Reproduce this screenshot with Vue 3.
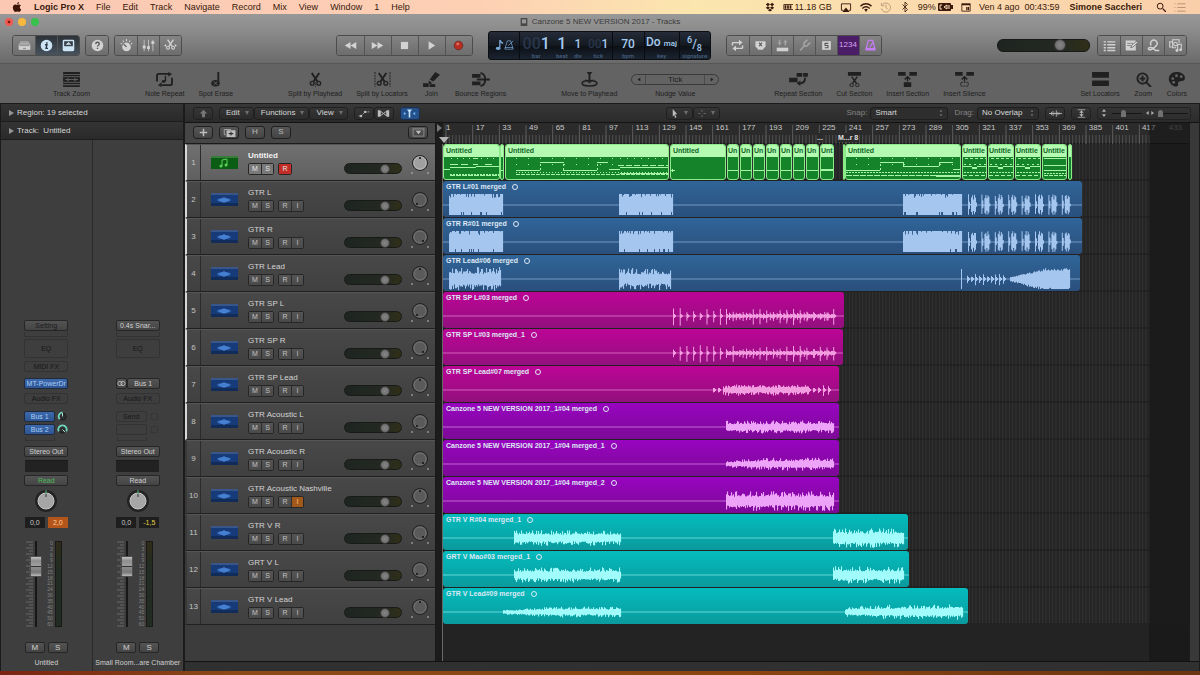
<template>
  <div class="desktop">
    <nav class="menubar" aria-label="Application menu">
      <svg class="menubar__apple" viewBox="0 0 12 12" v-html="icons.apple"></svg>
      <a v-for="(item, i) in menus" :key="item" href="#" :class="['menubar__item', { 'menubar__item--app': i === 0 }]">{{ item }}</a>
      <div class="menubar__status">
        <svg class="icon10" viewBox="0 0 12 12" v-html="icons.dropbox"></svg>
        <span class="menubar__memory"><svg class="icon10" viewBox="0 0 12 12" v-html="icons.memory"></svg>11.18 GB</span>
        <svg class="icon12" viewBox="0 0 12 12" v-html="icons.airplay"></svg>
        <svg class="icon12" viewBox="0 0 12 12" v-html="icons.wifi"></svg>
        <svg class="icon12 faint" viewBox="0 0 12 12" v-html="icons.clock"></svg>
        <svg class="icon10" viewBox="0 0 12 12" v-html="icons.bluetooth"></svg>
        <span class="menubar__battery">99%<svg class="battery" viewBox="0 0 15 8" v-html="icons.battery"></svg></span>
        <svg class="icon10" viewBox="0 0 12 12" v-html="icons.calendar"></svg>
        <span>Ven 4 ago&nbsp; 00:43:59</span>
        <b>Simone Saccheri</b>
        <svg class="icon10 menubar__search" viewBox="0 0 12 12" v-html="icons.search"></svg>
        <svg class="icon12 faint" viewBox="0 0 12 12" v-html="icons.menuList"></svg>
      </div>
    </nav>

    <main class="window">
      <header class="titlebar">
        <div class="lights">
          <button class="light light--close" aria-label="Close"></button>
          <button class="light light--min" aria-label="Minimize"></button>
          <button class="light light--max" aria-label="Zoom window"></button>
        </div>
        <h1 class="titlebar__title">
          <svg class="icon8" viewBox="0 0 12 12" v-html="icons.doc"></svg>Canzone 5 NEW VERSION 2017 - Tracks
        </h1>
      </header>

      <section class="control">
        <div v-for="(group, g) in leftGroups" :key="g" class="segment">
          <button v-for="b in group" :key="b.icon" :class="['segment__btn', { 'segment__btn--on': b.on }]" :aria-label="b.label">
            <svg viewBox="0 0 18 18" v-html="icons[b.icon]"></svg>
          </button>
        </div>
        <div class="control__gap control__gap--left"></div>
        <div class="segment segment--transport">
          <button v-for="b in transport" :key="b.icon" class="segment__btn" :aria-label="b.label">
            <svg viewBox="0 0 18 18" v-html="icons[b.icon]"></svg>
          </button>
        </div>
        <div class="lcd">
          <div class="lcd__icons">
            <svg viewBox="0 0 12 14" v-html="icons.lcdNote"></svg>
            <svg viewBox="0 0 12 14" v-html="icons.lcdMetro"></svg>
          </div>
          <div class="lcd__position">
            <div class="lcd__cell lcd__cell--bar"><span class="lcd__big"><i>00</i>1</span><small>bar</small></div>
            <div class="lcd__cell"><span class="lcd__big">1</span><small>beat</small></div>
            <div class="lcd__cell"><span>1</span><small>div</small></div>
            <div class="lcd__cell"><span><i>00</i>1</span><small>tick</small></div>
          </div>
          <div class="lcd__cell lcd__cell--tempo"><span>70</span><small>bpm</small></div>
          <div class="lcd__cell lcd__cell--key"><span>Do <em>maj</em></span><small>key</small></div>
          <div class="lcd__cell lcd__cell--sig"><span class="lcd__sig"><sup>6</sup>/<sub>8</sub></span><small>signature</small></div>
        </div>
        <div class="segment segment--modes">
          <button v-for="b in modes" :key="b.label" :class="['segment__btn', b.state]" :aria-label="b.label">
            <span v-if="b.text" class="segment__count">{{ b.text }}</span>
            <svg v-else viewBox="0 0 18 18" v-html="icons[b.icon]"></svg>
          </button>
        </div>
        <div class="control__gap control__gap--right"></div>
        <input class="slider slider--master" type="range" value="71" aria-label="Master volume" />
        <div class="segment segment--views">
          <button v-for="b in views" :key="b.icon" class="segment__btn" :aria-label="b.label">
            <svg viewBox="0 0 18 18" v-html="icons[b.icon]"></svg>
          </button>
        </div>
      </section>

      <section class="toolbar">
        <div v-for="(group, g) in tools" :key="g" class="toolbar__group">
          <template v-for="t in group" :key="t.label">
            <div v-if="t.nudge" class="nudge">
              <div class="nudge__control">
                <button aria-label="Nudge left"><svg viewBox="0 0 6 6"><path d="M5 0v6L1 3z" fill="currentColor" /></svg></button>
                <button class="nudge__value">Tick</button>
                <button aria-label="Nudge right"><svg viewBox="0 0 6 6"><path d="M1 0v6l4-3z" fill="currentColor" /></svg></button>
              </div>
              <span>{{ t.label }}</span>
            </div>
            <button v-else class="tool">
              <svg viewBox="0 0 20 16" v-html="icons[t.icon]"></svg>
              <span>{{ t.label }}</span>
            </button>
          </template>
        </div>
      </section>

      <div class="workspace">
        <aside class="inspector">
          <button class="inspector__row"><i class="disclosure"></i>Region: 19 selected</button>
          <button class="inspector__row"><i class="disclosure"></i>Track:&nbsp; Untitled</button>
          <div class="strips">
            <div v-for="s in strips" :key="s.name" class="strip">
              <button class="slot" :class="{ 'slot--dim': s.first }">{{ s.setting }}</button>
              <div class="thin"></div>
              <button class="slot slot--empty slot--eq">EQ</button>
              <button v-if="s.first" class="slot slot--empty slot--midi">MIDI FX</button>
              <div v-else class="slot slot--midi slot--blank"></div>
              <button v-if="s.first" class="slot slot--blue slot--input">MT-PowerDr</button>
              <div v-else class="slot-pair">
                <button class="slot" aria-label="Stereo"><svg viewBox="0 0 12 8" v-html="icons.stereo"></svg></button>
                <button class="slot">Bus 1</button>
              </div>
              <button class="slot slot--empty slot--fx">Audio FX</button>
              <div v-for="(send, n) in s.sends" :key="n" class="send">
                <button :class="['slot', s.first ? 'slot--blue' : 'slot--empty']" :aria-label="send || 'Empty send'">{{ send }}</button>
                <svg viewBox="0 0 12 12">
                  <circle cx="6" cy="6" r="4" :fill="s.first ? '#2b2f30' : 'none'" :stroke="s.first ? '#1c1c1c' : '#343434'" />
                  <path v-if="s.first" :d="n ? 'M2 8a4.5 4.5 0 1 1 8 0' : 'M3 9a4.5 4.5 0 0 1 3-7.500'" fill="none" stroke="#6fd6bd" stroke-width="2" />
                  <path v-if="s.first" :d="n ? 'M6 6l3 3' : 'M6 6V2'" stroke="#bce8dc" />
                </svg>
              </div>
              <div class="thin thin--send"></div>
              <button class="slot slot--out">Stereo Out</button>
              <div class="group-slot"></div>
              <button :class="['slot', { 'slot--read': s.first }]">Read</button>
              <svg class="pan" viewBox="0 0 24 24">
                <circle cx="12" cy="12" r="11" fill="#232323" />
                <circle cx="12" cy="12" r="8" fill="#a6a6a6" stroke="#c6c6c6" />
                <path d="M12 1v4" stroke="#4bb36c" /><path d="M12 5v3" stroke="#333" />
              </svg>
              <div class="levels">
                <output>0,0</output>
                <output :class="s.first ? 'levels__clip' : 'levels__peak'">{{ s.peak }}</output>
              </div>
              <div class="fader">
                <svg class="fader__ticks" viewBox="0 0 8 86"><path :d="faderTicks" stroke="#686868" /></svg>
                <input class="fader__input" type="range" value="77" :aria-label="s.name + ' volume'" />
                <div class="fader__scale"><span v-for="v in scale" :key="v">{{ v }}</span></div>
                <div class="fader__meter"></div>
              </div>
              <div class="mute-solo"><button class="slot">M</button><button class="slot">S</button></div>
              <p class="strip__name">{{ s.name }}</p>
            </div>
          </div>
        </aside>

        <section class="arrange">
          <div class="arrange__menu">
            <button class="chip chip--up" aria-label="Up"><svg viewBox="0 0 12 12" v-html="icons.up"></svg></button>
            <div class="chips">
              <button v-for="m in ['Edit', 'Functions', 'View']" :key="m" class="chip chip--menu">{{ m }}<i class="caret"></i></button>
            </div>
            <div class="chips chips--small">
              <button class="chip" aria-label="Automation"><svg viewBox="0 0 16 10" v-html="icons.automation"></svg></button>
              <button class="chip" aria-label="Flex"><svg viewBox="0 0 16 10" v-html="icons.flex"></svg></button>
            </div>
            <button class="chip chip--catch" aria-label="Catch playhead"><svg viewBox="0 0 16 10" v-html="icons.catch"></svg></button>
            <div class="arrange__gap arrange__gap--wide"></div>
            <div class="chips">
              <button class="chip chip--tool" aria-label="Pointer tool"><svg viewBox="0 0 10 12" v-html="icons.pointer"></svg><i class="caret"></i></button>
              <button class="chip chip--tool chip--dim" aria-label="Marquee tool"><svg viewBox="0 0 10 12" v-html="icons.marquee"></svg><i class="caret"></i></button>
            </div>
            <div class="arrange__gap"></div>
            <label class="pick" for="snap">Snap:</label>
            <span class="pick__box pick__box--snap">
              <select id="snap"><option>Smart</option></select>
              <svg viewBox="0 0 6 10" v-html="icons.updown"></svg>
            </span>
            <label class="pick" for="drag">Drag:</label>
            <span class="pick__box pick__box--drag">
              <select id="drag"><option>No Overlap</option></select>
              <svg viewBox="0 0 6 10" v-html="icons.updown"></svg>
            </span>
            <button class="chip chip--side" aria-label="Waveform zoom"><svg viewBox="0 0 16 10" v-html="icons.waveZoom"></svg></button>
            <button class="chip chip--side" aria-label="Auto zoom"><svg viewBox="0 0 12 12" v-html="icons.autoZoom"></svg></button>
            <div class="zooms">
              <svg class="icon8" viewBox="0 0 8 12"><path d="M4 0l3 4H1zM4 12l3-4H1z" fill="#b0b0b0" /></svg>
              <input type="range" value="35" aria-label="Vertical zoom" />
              <svg class="icon8" viewBox="0 0 12 8"><path d="M0 4l4-3v6zM12 4L8 1v6z" fill="#b0b0b0" /></svg>
              <input type="range" value="0" aria-label="Horizontal zoom" />
            </div>
          </div>

          <div class="arrange__body">
            <div class="headers">
              <div class="headers__top">
                <button class="chip" aria-label="New track"><svg viewBox="0 0 12 12"><path d="M6 1v10M1 6h10" stroke="currentColor" stroke-width="2" /></svg></button>
                <button class="chip" aria-label="Duplicate track"><svg viewBox="0 0 16 12" v-html="icons.duplicate"></svg></button>
                <button class="chip">H</button>
                <button class="chip">S</button>
                <button class="chip chip--last" aria-label="Header configuration"><svg viewBox="0 0 14 10" v-html="icons.headerMenu"></svg></button>
              </div>
              <div v-for="(t, i) in tracks" :key="t.name" :class="['track', { 'track--selected': i === 0, 'track--marked': i < 8 }]">
                <span class="track__number">{{ i + 1 }}</span>
                <svg class="track__icon" viewBox="0 0 27 13" v-html="i === 0 ? icons.midiTrack : icons.audioTrack"></svg>
                <div class="track__main">
                  <span class="track__name">{{ t.name }}</span>
                  <div class="track__controls">
                    <span class="track__pair"><button>M</button><button>S</button></span>
                    <span class="track__pair">
                      <button :class="{ armed: i === 0 }">R</button>
                      <button v-if="i > 0" :class="{ monitoring: i === 9 }">I</button>
                    </span>
                  </div>
                </div>
                <input class="slider" type="range" value="75" :aria-label="t.name + ' volume'" />
                <svg class="track__pan" viewBox="0 0 18 20">
                  <circle cx="9" cy="9" r="7.500" :fill="i === 0 ? '#a0a0a0' : '#5a5a5a'" stroke="#202020" />
                  <circle cx="9" cy="9" r="6" fill="none" :stroke="i === 0 ? '#b8b8b8' : '#737373'" />
                  <circle :cx="t.pan === 'L' ? 6 : t.pan === 'R' ? 12 : 9" :cy="t.pan ? 13 : 4" r="1" fill="#111" />
                  <path d="M1 18v2M17 18v2" stroke="#bbb" />
                </svg>
              </div>
            </div>

            <div class="timeline">
              <div class="ruler">
                <svg class="ruler__ticks" viewBox="0 0 707 22" width="707" height="22">
                  <path :d="rulerMinor" stroke="#505050" />
                  <path :d="rulerMajor" stroke="#5c5c5c" />
                </svg>
                <svg class="ruler__start" viewBox="0 0 14 20">
                  <path d="M0 1l5 4-5 4z" fill="#777" />
                  <path d="M2 14h10l-5 6z" fill="#b2b2b2" />
                </svg>
                <div class="ruler__labels">
                  <span v-for="n in barLabels" :key="n" :style="{ width: 16 * PX_PER_BAR + 'px' }" :class="{ dim: n > 417 }">{{ n }}</span>
                </div>
                <span class="ruler__marker">M...r 8</span>
                <span class="ruler__dots">...</span>
              </div>
              <div class="lanes">
                <svg class="lanes__grid" viewBox="0 0 707 481" width="707" height="481">
                  <path :d="gridLines" stroke="#333" />
                  <path :d="laneLines" stroke="#1d1d1d" />
                </svg>
                <div v-for="t in tracks" :key="t.name" class="lane">
                  <div
                    v-for="r in t.regions"
                    :key="r.start"
                    :class="['region', 'region--' + t.color]"
                    :style="{ width: r.width + 'px', marginLeft: r.gap + 'px' }"
                  >
                    <div :class="['region__title', { 'region__title--tight': r.width < 30 }]">
                      <span>{{ r.title }}</span>
                      <i v-if="t.color !== 'green'"></i>
                    </div>
                    <svg class="region__art" :viewBox="`0 0 ${r.width} 36`" :width="r.width" height="36">
                      <path v-if="t.color !== 'green'" :d="`M0 ${MID}H${r.width}`" stroke="currentColor" opacity="0.6" />
                      <path :d="r.path" fill="currentColor" />
                    </svg>
                  </div>
                </div>
              </div>
              <div class="timeline__end"></div>
            </div>
            <div class="scrollbar"></div>
          </div>
          <footer class="arrange__foot"></footer>
        </section>
      </div>
    </main>
  </div>
</template>

<script setup>
const PX_PER_BAR = 5 / 3;

const menus = ['Logic Pro X', 'File', 'Edit', 'Track', 'Navigate', 'Record', 'Mix', 'View', 'Window', '1', 'Help'];

const scissors = '<path d="M5 1l6 9M13 1l-6 9" stroke="currentColor" stroke-width="2"/><circle cx="5.500" cy="12" r="2" fill="none" stroke="currentColor" stroke-width="1.500"/><circle cx="12.500" cy="12" r="2" fill="none" stroke="currentColor" stroke-width="1.500"/>';

const icons = {
  apple: '<path d="M8.500 0C7 .3 6 1.500 6.200 2.800 7.500 2.700 8.500 1.500 8.500 0zM6.200 3.500C5.500 3.500 5 3 4 3 2.200 3 1 4.600 1 6.700 1 9 2.600 12 4.200 12c.8 0 1.200-.5 2.100-.5s1.200.5 2 .5c1.200 0 2.200-1.700 2.700-3.100C8.800 8 8.800 5 10.700 4.200 9.500 2.600 7.500 3 6.200 3.500z" fill="#3a1508"/>',
  dropbox: '<path d="M3.500 1L6 3 3.500 5 1 3zM8.500 1L11 3 8.500 5 6 3zM3.500 5L6 7 3.500 9 1 7zM8.500 5L11 7 8.500 9 6 7zM6 8l2.500 2L6 11.500 3.500 10z" fill="currentColor"/>',
  memory: '<path d="M1 3h11M1 9h11M1 3v6" stroke="currentColor" fill="none"/><path d="M3 4v4M6 4v4M9 4v4" stroke="currentColor" stroke-width="2"/>',
  airplay: '<path d="M3 9H1V2h10v7H9" stroke="currentColor" fill="none"/><path d="M6 6l4 5H2z" fill="currentColor"/>',
  wifi: '<path d="M0 4.500Q6-.5 12 4.500M2 7q4-3.500 8 0" stroke="currentColor" stroke-width="1.500" fill="none"/><path d="M4 8q2-1.500 4 0L6 11z" fill="currentColor"/>',
  clock: '<path d="M2 3a5 5 0 1 1-1 4M1 1v3h3M6 3v3l2 2" stroke="currentColor" fill="none"/>',
  bluetooth: '<path d="M3 3l6 6-3 3V0l3 3-6 6" stroke="currentColor" fill="none"/>',
  battery: '<rect x="0" y="0" width="13" height="8" rx="1" fill="currentColor"/><rect x="13" y="2" width="2" height="4" fill="currentColor"/><path d="M4 2H2v4h2M6 4l3-2v4zM11 2v4" stroke="#ffe0b8" fill="none"/>',
  calendar: '<path d="M1 2h10v9H1z" fill="none" stroke="currentColor"/><path d="M1 3h10M7 6v4M9 6v4" stroke="currentColor" stroke-width="1.500"/>',
  search: '<circle cx="5" cy="5" r="3.500" fill="none" stroke="currentColor" stroke-width="1.200"/><path d="M8 8l4 4" stroke="currentColor" stroke-width="1.500"/>',
  menuList: '<path d="M0 2h1M3 2h9M0 6h1M3 6h9M0 10h1M3 10h9" stroke="currentColor"/>',
  doc: '<rect x="1" y="0" width="10" height="12" fill="#484848"/><rect x="3" y="2" width="6" height="6" fill="#979797"/>',
  library: '<path d="M4 4h10l3 6H1z" fill="none" stroke="currentColor"/><path d="M4 6h10M3 8h12" stroke="currentColor"/><rect x="1" y="10" width="16" height="5" fill="currentColor"/><path d="M7 13h4" stroke="#666"/>',
  info: '<circle cx="9" cy="9" r="8" fill="currentColor"/><path d="M9.500 4.500v2M7 8h2.500l-1 5H11" stroke="#26313d" stroke-width="2" fill="none"/>',
  toolbar: '<rect x="2" y="2" width="14" height="14" rx="1" fill="none" stroke="currentColor" stroke-width="2"/><rect x="2" y="10" width="14" height="6" fill="currentColor"/><path d="M9 4l4 4H5z" fill="currentColor"/>',
  help: '<circle cx="9" cy="9" r="8" fill="currentColor"/><path d="M6.500 7c0-3.500 5-3 5-.5 0 2-2.500 2-2.500 4M9 12v2" stroke="#555" stroke-width="1.800" fill="none"/>',
  smart: '<circle cx="9" cy="11" r="6" fill="currentColor"/><path d="M9 11L5 7" stroke="#555" stroke-width="1.500"/><path d="M1 6l2 1M4 2l1 2M9 0v3M14 2l-1 2M17 6l-2 1" stroke="currentColor" stroke-width="1.500"/>',
  mixer: '<path d="M3 1v16M9 1v16M15 1v16" stroke="currentColor" stroke-width="1"/><path d="M1 11h4M7 12h4M13 5h4" stroke="currentColor" stroke-width="4"/>',
  editors: scissors + '<path d="M0 9l3-2v4zM18 9l-3-2v4z" fill="currentColor"/>',
  rewind: '<path d="M9 4v10L1 9zM17 4v10L9 9z" fill="currentColor"/>',
  forward: '<path d="M1 4v10l8-5zM9 4v10l8-5z" fill="currentColor"/>',
  stop: '<rect x="4" y="4" width="10" height="10" fill="currentColor"/>',
  play: '<path d="M5 3v12l9-6z" fill="currentColor"/>',
  record: '<circle cx="9" cy="9" r="6" fill="#b82e22" stroke="#5d2420"/><circle cx="8" cy="7" r="2" fill="#de6f5f"/>',
  lcdNote: '<path d="M7 1v9M7 1q1 3 4 4" stroke="currentColor" stroke-width="1.500" fill="none"/><ellipse cx="5" cy="11" rx="3" ry="2" fill="currentColor"/>',
  lcdMetro: '<path d="M4 2h4l3 10H1zM1 10h10M5 8l6-6" stroke="currentColor" fill="none" stroke-width="1.200" opacity=".7"/>',
  cycle: '<path d="M2 9V6q0-1 1-1h9M16 9v3q0 1-1 1H6" stroke="currentColor" stroke-width="2" fill="none"/><path d="M11 1l5 4-5 4zM7 9l-5 4 5 4z" fill="currentColor"/>',
  replace: '<path d="M2 3h14v7l-4 5H6l-4-5z" fill="currentColor"/><path d="M7 5l4 5M11 5l-4 5" stroke="#555" stroke-width="1.500"/>',
  punch: '<rect x="1" y="12" width="16" height="5" fill="currentColor"/><g opacity=".5"><path d="M5 1v4M13 9V4" stroke="currentColor" stroke-width="2"/><path d="M2 5h6l-3 4zM10 5h6l-3-4z" fill="currentColor"/></g>',
  tuner: '<path d="M3 16l6-7M9 9q-2-2 0-4l4-4M9 9q2 2 4 0l4-4" stroke="currentColor" stroke-width="2" fill="none" opacity=".5"/>',
  solo: '<rect x="3" y="3" width="12" height="12" fill="currentColor"/><path d="M11.500 6H7v3h4v3H6.500" stroke="#555" stroke-width="1.500" fill="none"/>',
  metro: '<path d="M6 2h6l3 11H3zM8 11l5-7" stroke="currentColor" stroke-width="1.800" fill="none"/><rect x="2" y="13" width="14" height="3" fill="currentColor"/>',
  list: '<path d="M1 4h3M6 4h11M1 8h3M6 8h11M1 12h3M6 12h11M1 16h3M6 16h11" stroke="currentColor" stroke-width="2"/>',
  notes: '<path d="M1 2h14v14H1z" fill="currentColor"/><path d="M3 6h8M3 9h5" stroke="#666"/><path d="M8 12l1-3 7-6 2 2-7 6z" fill="#ddd" stroke="#555"/>',
  loops: '<path d="M6 9a4.500 4.500 0 1 1 7 0q-3 4-8 6-3 0-3-2 1-2 5-1l5 4h5" stroke="currentColor" stroke-width="2" fill="none"/>',
  media: '<path d="M4 11H1V4h3M5 4V1h9v5M5 4v8h5" stroke="currentColor" stroke-width="1.500" fill="none"/><circle cx="9" cy="7" r="2.500" fill="none" stroke="currentColor" stroke-width="1.500"/><path d="M12 16V8l5-1v8" stroke="currentColor" stroke-width="1.500" fill="none"/><circle cx="11" cy="16" r="2" fill="currentColor"/><circle cx="16" cy="15" r="2" fill="currentColor"/>',
  trackZoom: '<path d="M1 1h18M1 15h18" stroke="currentColor" stroke-width="2"/><rect x="1" y="3" width="18" height="10" fill="currentColor"/><path d="M1 5h18M1 11h18M3 8h14" stroke="#606060"/><path d="M4 8l3-2v4zM16 8l-3-2v4z" fill="#606060"/>',
  noteRepeat: '<path d="M2 10V4q0-2 2-2h11M18 6v6q0 2-2 2H7" stroke="currentColor" stroke-width="2" fill="none"/><path d="M14 0l4 2-4 3zM7 11l-4 3 4 2z" fill="currentColor"/><path d="M11 4v6" stroke="currentColor" stroke-width="1.500"/><ellipse cx="9" cy="10" rx="2" ry="1.500" fill="currentColor"/>',
  spotErase: '<path d="M13 0v11" stroke="currentColor" stroke-width="2"/><ellipse cx="10" cy="12" rx="4.500" ry="3.500" fill="currentColor"/><path d="M8 10l4 4M12 10l-4 4" stroke="#666"/>',
  splitPlayhead: `<g transform="translate(1 0)">${scissors}</g><path d="M10 11v5" stroke="currentColor" stroke-dasharray="1 1"/>`,
  splitLocators: `<g transform="translate(1 0)">${scissors}</g><path d="M2 0v16M18 0v16" stroke="currentColor" stroke-dasharray="2 1"/>`,
  join: '<path d="M8 8l6-8 5 3-7 7z" fill="currentColor"/><path d="M7 9l4 3-4 1z" fill="currentColor"/><rect x="1" y="12" width="6" height="4" fill="currentColor"/><rect x="8" y="13" width="6" height="3" fill="currentColor"/>',
  bounce: '<path d="M1 2h9v4H1zM1 10h9v4H1zM6 7h14v2H6z" fill="currentColor"/><path d="M10 1q5 1 5 7t-5 7" stroke="currentColor" stroke-width="2" fill="none"/>',
  movePlayhead: '<path d="M7 0h6l-2 3v8H9V3z" fill="currentColor"/><ellipse cx="10" cy="12" rx="8" ry="3" fill="none" stroke="currentColor" stroke-width="1.500"/><path d="M6 8l4 4 4-4" stroke="currentColor" fill="none"/>',
  repeatSection: '<path d="M8 1h6v4H8zM15 1h5v4h-5zM0 6h9v5H0z" fill="currentColor"/><path d="M17 6q0 6-6 6" stroke="currentColor" stroke-width="2" fill="none"/><path d="M12 9v6l-4-3z" fill="currentColor"/>',
  cutSection: '<rect x="3" y="0" width="14" height="4" fill="currentColor"/><path d="M7 5l5 7M13 5l-5 7" stroke="currentColor" stroke-width="1.500"/><circle cx="7" cy="14" r="1.800" fill="none" stroke="currentColor"/><circle cx="13" cy="14" r="1.800" fill="none" stroke="currentColor"/>',
  insertSection: '<path d="M0 0h8v4H0zM12 0h8v4h-8zM6 11h8v5H6z" fill="currentColor"/><path d="M10 5v5M7 8l3-3 3 3" stroke="currentColor" stroke-width="1.500" fill="none"/>',
  insertSilence: '<path d="M0 0h8v4H0zM12 0h8v4h-8z" fill="currentColor"/><path d="M6 11h8v4H6z" fill="none" stroke="currentColor" stroke-dasharray="2 1"/><path d="M10 5v5M7 8l3-3 3 3" stroke="currentColor" stroke-width="1.500" fill="none"/>',
  setLocators: '<path d="M1 0h18v6H1zM1 9h18v6H1z" fill="currentColor"/>',
  zoom: '<circle cx="9" cy="7" r="5.500" fill="none" stroke="currentColor" stroke-width="2"/><path d="M9 4v6M6 7h6M13 11l5 5" stroke="currentColor" stroke-width="2"/>',
  colors: '<path d="M10 0C4 0 1 5 2 9s6 8 9 6c2-2-1-4 2-5s6 0 6-4-5-6-9-6z" fill="currentColor"/><circle cx="6" cy="7" r="1.500" fill="#636363"/><circle cx="10" cy="4" r="1.500" fill="#636363"/><circle cx="15" cy="5" r="1.500" fill="#636363"/><circle cx="7" cy="11" r="1.500" fill="#636363"/>',
  stereo: '<circle cx="4" cy="4" r="2.800" fill="none" stroke="currentColor"/><circle cx="8" cy="4" r="2.800" fill="none" stroke="currentColor"/>',
  up: '<path d="M6 1l5 5H8v5H4V6H1z" fill="currentColor"/>',
  automation: '<path d="M2 8h3M5 8l5-5M10 3h5" stroke="currentColor" stroke-dasharray="2 1" fill="none"/><circle cx="5" cy="8" r="1.500" fill="currentColor"/><circle cx="10" cy="3" r="1.500" fill="currentColor"/>',
  flex: '<path d="M1 1h3v8H1zM12 1h3v8h-3z" fill="currentColor"/><path d="M4 2l4 3 4-3v6L8 5 4 8z" fill="none" stroke="currentColor" stroke-width="1.200"/>',
  catch: '<path d="M5 0h6L9 3v7H7V3z" fill="#c5e2ff"/><path d="M1 3l3 2-3 2zM15 3l-3 2 3 2z" fill="#74b3f2"/>',
  pointer: '<path d="M2 0l6 7H5l2 4-2 1-1-4-2 2z" fill="currentColor"/>',
  marquee: '<path d="M5 1v3M5 8v3M0 6h3M7 6h3" stroke="currentColor"/>',
  updown: '<path d="M3 0l2 3H1zM3 10l2-3H1z" fill="currentColor"/>',
  waveZoom: '<path d="M0 5h16M3 3v4M5 2v6M7 4v2M9 1v8M11 3v4M13 4v2" stroke="currentColor"/>',
  autoZoom: '<path d="M1 1h10M1 11h10M6 2v8" stroke="currentColor"/><path d="M6 2l3 3H3zM6 10l3-3H3z" fill="currentColor"/>',
  duplicate: '<path d="M3 9H1V2h9" stroke="currentColor" fill="none"/><path d="M4 3h12v9H4z" fill="currentColor"/><path d="M10 5v5M7 7.500h6" stroke="#333" stroke-width="1.500"/>',
  headerMenu: '<rect x="1" y="1" width="12" height="8" fill="none" stroke="currentColor" opacity=".6"/><path d="M4 3h6L7 7z" fill="currentColor"/>',
  midiTrack: '<rect width="27" height="13" fill="#0c5d14"/><rect width="27" height="2" fill="#377d39"/><path d="M11 10V4l5-1v6" stroke="#59d158" fill="none"/><circle cx="10" cy="10" r="1.500" fill="#59d158"/><circle cx="15" cy="9" r="1.500" fill="#59d158"/>',
  audioTrack: '<rect width="27" height="13" fill="#173a78"/><rect width="27" height="2" fill="#38568a"/><rect y="10" width="27" height="3" fill="#122c5a"/><ellipse cx="13" cy="7" rx="7" ry="2" fill="#3268b8"/><path d="M9 6v2M11 5v4M13 4v6M15 5v4M17 6v2" stroke="#5b97e8"/>'
};

const leftGroups = [
  [
    { icon: 'library', label: 'Library' },
    { icon: 'info', label: 'Inspector', on: true },
    { icon: 'toolbar', label: 'Toolbar', on: true }
  ],
  [{ icon: 'help', label: 'Quick Help' }],
  [
    { icon: 'smart', label: 'Smart Controls' },
    { icon: 'mixer', label: 'Mixer' },
    { icon: 'editors', label: 'Editors' }
  ]
];

const transport = [
  { icon: 'rewind', label: 'Rewind' },
  { icon: 'forward', label: 'Forward' },
  { icon: 'stop', label: 'Stop' },
  { icon: 'play', label: 'Play' },
  { icon: 'record', label: 'Record' }
];

const modes = [
  { icon: 'cycle', label: 'Cycle' },
  { icon: 'replace', label: 'Replace' },
  { icon: 'punch', label: 'Autopunch' },
  { icon: 'tuner', label: 'Tuner' },
  { icon: 'solo', label: 'Solo' },
  { text: '1234', label: 'Count in', state: 'segment__btn--purple' },
  { icon: 'metro', label: 'Metronome', state: 'segment__btn--metro' }
];

const views = [
  { icon: 'list', label: 'List Editors' },
  { icon: 'notes', label: 'Note Pad' },
  { icon: 'loops', label: 'Apple Loops' },
  { icon: 'media', label: 'Browsers' }
];

const tools = [
  [{ icon: 'trackZoom', label: 'Track Zoom' }],
  [
    { icon: 'noteRepeat', label: 'Note Repeat' },
    { icon: 'spotErase', label: 'Spot Erase' }
  ],
  [
    { icon: 'splitPlayhead', label: 'Split by Playhead' },
    { icon: 'splitLocators', label: 'Split by Locators' },
    { icon: 'join', label: 'Join' },
    { icon: 'bounce', label: 'Bounce Regions' }
  ],
  [
    { icon: 'movePlayhead', label: 'Move to Playhead' },
    { nudge: true, label: 'Nudge Value' }
  ],
  [
    { icon: 'repeatSection', label: 'Repeat Section' },
    { icon: 'cutSection', label: 'Cut Section' },
    { icon: 'insertSection', label: 'Insert Section' },
    { icon: 'insertSilence', label: 'Insert Silence' }
  ],
  [
    { icon: 'setLocators', label: 'Set Locators' },
    { icon: 'zoom', label: 'Zoom' },
    { icon: 'colors', label: 'Colors' }
  ]
];

const strips = [
  { first: true, name: 'Untitled', setting: 'Setting', sends: ['Bus 1', 'Bus 2'], peak: '2,0' },
  { first: false, name: 'Small Room...are Chamber', setting: '0.4s Snar...', sends: ['Send', ''], peak: '-1,5' }
];

const scale = [0, 3, 6, 9, 12, 15, 18, 21, 24, 30, 35, 40, 45, 50, 60];
const faderTicks = Array.from({ length: 29 }, (_, i) => `M${i % 2 ? 4 : 1} ${i * 3 + 1}H8`).join('');

// Ruler and grid
const barLabels = Array.from({ length: 28 }, (_, i) => 1 + i * 16);
const everyBars = (step, y1, y2) => {
  let d = '';
  for (let x = 3; x < 707; x += step * PX_PER_BAR) d += `M${x.toFixed(2)} ${y1}V${y2}`;
  return d;
};
const rulerMinor = everyBars(2, 12, 21);
const rulerMajor = everyBars(16, 2, 21);
const gridLines = everyBars(2, 0, 481);
const laneLines = Array.from({ length: 13 }, (_, i) => `M0 ${i * 37 + 36}H707`).join('');

// Small seeded generator so that the waveforms are the same on every load
let seed = 11;
const rand = () => {
  seed = (seed * 16807) % 2147483647;
  return seed / 2147483647;
};

const MID = 24;
const bar = (x, up, down = up, w = 1) => `M${x} ${MID - up}h${w}V${MID + down}h${-w}z`;
const peak = () => 0.45 + 0.3 * rand() + (rand() < 0.25 ? 0.35 : 0);

function solid(from, to) {
  let d = '';
  for (let x = from; x < to; x++) d += bar(x, rand() < 0.3 ? 11 - rand() * 4 : 11, rand() < 0.12 ? 7 : 10, 1.1);
  return d;
}

function noise(from, to, amp, grow = 1) {
  let d = '';
  for (let x = from; x < to; x++) {
    const k = amp * (grow + (1 - grow) * Math.min(1, (x - from) / 50));
    d += bar(x, k * peak(), k * peak(), 1.1);
  }
  return d;
}

function chords(from, count) {
  let d = '';
  for (let i = 0; i < count; i++) {
    const x = from + i * 13.4;
    [11, 5, 1, 9, 11, 7, 11, 9, 3].forEach((h, j) => {
      d += bar((x + j).toFixed(1), h - rand() * 2, h - 1 - rand());
    });
  }
  return d;
}

function hits(from, to, every, amp = 8) {
  let d = '';
  for (let x = from; x < to; x += every) {
    const h = amp * (0.4 + rand() * 0.6);
    d += bar(x.toFixed(1), h * 0.8, h) + bar((x + 1).toFixed(1), 2) + bar((x + 2).toFixed(1), 1);
  }
  return d;
}

const swell = (from, to) => {
  let d = '';
  for (let x = from; x < to; x++) {
    const k = Math.min(11, 2 + (x - from) * 0.25);
    d += bar(x, k * (0.75 + rand() * 0.25), Math.min(10, k * (0.8 + rand() * 0.4)), 1.1);
  }
  return d;
};

// MIDI notes: [x, y, width]
const notes = (list) => list.map(([x, y, w, h = 1]) => `M${x} ${y}h${w}v${h}h${-w}z`).join('');
const dashes = (from, to, y, w = 2, gap = 2) => {
  const list = [];
  for (let x = from; x < to; x += w + gap) list.push([x, y, Math.min(w, to - x)]);
  return notes(list);
};
const intro = notes([[0, 24, 6, 1], [6, 22, 26, 1], [32, 21, 24, 1], [6, 19, 8], [17, 19, 7], [29, 19, 5], [41, 19, 7], [29, 13, 5]])
  + dashes(7, 54, 13, 1, 5) + dashes(6, 56, 29, 2, 1) + dashes(6, 56, 30, 5, 1);
const verse = notes([[10, 25, 24], [34, 17, 24], [57, 25, 34], [91, 17, 11], [103, 24, 11], [114, 22, 50], [114, 28, 50], [34, 19, 1, 2], [34, 23, 1, 2], [57, 19, 1, 2], [57, 23, 1, 2], [91, 19, 1, 2], [91, 23, 1, 2]])
  + dashes(10, 114, 13, 1, 11) + dashes(10, 114, 19, 1, 11) + dashes(10, 163, 27, 1, 2) + dashes(10, 163, 29, 4, 1)
  + dashes(114, 163, 13, 1, 6) + dashes(112, 163, 20, 6, 2);
const chorus = notes([[0, 25, 34], [34, 17, 23], [57, 21, 36], [93, 17, 14], [34, 19, 1, 2], [34, 23, 1, 2], [57, 17, 1, 4], [93, 17, 1, 4], [90, 30, 26, 2], [107, 24, 8]])
  + dashes(10, 110, 13, 1, 11) + dashes(10, 110, 19, 1, 11) + dashes(0, 114, 27, 2, 1) + dashes(0, 90, 30, 6, 1);
const outro = dashes(2, 24, 13, 3, 2) + notes([[0, 21, 9], [14, 21, 11], [9, 22, 5, 2]]) + dashes(1, 25, 19, 2, 3)
  + dashes(1, 24, 27, 2, 1) + dashes(0, 24, 30, 4, 2);
const outroLines = notes([[1, 13, 23], [1, 20, 23], [1, 25, 23]]) + dashes(1, 24, 28, 2, 1) + dashes(1, 24, 30, 4, 1);

const short = (w) => notes([[0, 25, w]]);

// Names are shortened to what a narrow region has room for
const fitName = (width) => (width > 30 ? 'Untitled' : width > 20 ? 'Untitle' : width > 13 ? 'Unt' : width > 5 ? 'Un' : '');

const midi = [
  [0, 57, intro], [57, 61, short(3)], [62, 226, verse], [227, 283, notes([[0, 25, 4], [1, 24, 1, 3]])],
  [284, 296, short(12)], [297, 309, short(12)], [310, 322, short(12)], [323, 336, short(13)],
  [337, 349, short(12)], [350, 362, short(12)], [363, 376, short(13)], [377, 391, notes([[0, 24, 12, 2]])],
  [400, 402, ''], [402, 518, chorus], [519, 544, outro], [545, 571, outro], [572, 598, outro],
  [599, 624, outroLines], [625, 629, '']
].map(([start, end, path], i, all) => ({
  start,
  width: end - start,
  gap: i ? start - all[i - 1][1] : 0,
  title: fitName(end - start),
  path
}));

const audio = (title, width, path) => [{ title, start: 0, gap: 0, width, path }];
const rhythm = () => solid(6, 60) + solid(176, 230) + solid(460, 519) + chords(525, 8);
const clean = () => hits(230, 283, 6.7, 10) + hits(283, 391, 6.7, 9) + hits(286, 391, 3.4, 5) + noise(284, 391, 2);
const longTitle = 'Canzone 5 NEW VERSION 2017_1#04 merged';

const tracks = [
  { name: 'Untitled', color: 'green', regions: midi },
  { name: 'GTR L', color: 'blue', pan: 'L', regions: audio('GTR L#01 merged', 639, rhythm()) },
  { name: 'GTR R', color: 'blue', pan: 'R', regions: audio('GTR R#01 merged', 639, rhythm()) },
  {
    name: 'GTR Lead',
    color: 'blue',
    regions: audio('GTR Lead#06 merged', 637, noise(6, 58, 11) + noise(176, 228, 10) + bar(518, 10) + hits(524, 562, 4, 7) + swell(567, 627))
  },
  { name: 'GTR SP L', color: 'magenta', pan: 'L', regions: audio('GTR SP L#03 merged', 401, clean()) },
  { name: 'GTR SP R', color: 'magenta', pan: 'R', regions: audio('GTR SP L#03 merged_1', 400, clean()) },
  { name: 'GTR SP Lead', color: 'magenta', regions: audio('GTR SP Lead#07 merged', 396, hits(270, 390, 5, 6) + noise(282, 365, 5)) },
  { name: 'GTR Acoustic L', color: 'purple', pan: 'L', regions: audio(longTitle, 396, noise(283, 391, 6)) },
  { name: 'GTR Acoustic R', color: 'purple', pan: 'R', regions: audio(longTitle + '_1', 396, noise(283, 391, 6, 0.6)) },
  { name: 'GTR Acoustic Nashville', color: 'purple', regions: audio(longTitle + '_2', 396, noise(283, 391, 9)) },
  { name: 'GTR V R', color: 'teal', pan: 'R', regions: audio('GTR V R#04 merged_1', 465, noise(71, 178, 7) + noise(390, 461, 9)) },
  { name: 'GRT V L', color: 'teal', pan: 'L', regions: audio('GRT V Mao#03 merged_1', 466, noise(71, 178, 7) + noise(390, 461, 8)) },
  { name: 'GTR V Lead', color: 'teal', regions: audio('GTR V Lead#09 merged', 525, noise(60, 178, 5, 0.5) + noise(402, 520, 7, 0.7)) }
];
</script>

<style>
body {
  background: #7a3c16;
}
</style>

<style scoped>
.desktop {
  display: flex;
  flex-direction: column;
  height: 100vh;
  overflow: hidden;
  padding-bottom: 4px;
  box-sizing: border-box;
  font-family: "Liberation Sans", Arial, sans-serif;
  font-size: 8px;
  line-height: 10px;
  color: #c4c4c4;
  background: linear-gradient(90deg, #7c2413, #8a4a17 20%, #8c4510 60%, #6a3512);
}

button,
select,
input {
  font: inherit;
  color: inherit;
  margin: 0;
  padding: 0;
  box-sizing: border-box;
}

button {
  border: 0;
  background: none;
}

svg {
  display: block;
  flex: none;
}

.icon8 { width: 8px; height: 8px; }
.icon10 { width: 10px; height: 10px; }
.icon12 { width: 12px; height: 11px; }
.faint { opacity: 0.35; }

/* System menu */
.menubar {
  display: flex;
  align-items: center;
  flex: none;
  height: 14px;
  padding: 0 14px 0 12px;
  gap: 12px;
  font-size: 9px;
  color: #38190c;
  background: linear-gradient(90deg, #fbc8b4, #fdd0b4 40%, #fbe6ae 58%, #fcd9ae 80%, #f9cfa9);
}

.menubar__apple { width: 10px; height: 10px; }
.menubar__item { color: inherit; text-decoration: none; }
.menubar__item--app { font-weight: 700; }

.menubar__status {
  display: flex;
  align-items: center;
  gap: 8px;
  margin-left: auto;
  white-space: nowrap;
}

.menubar__memory,
.menubar__battery {
  display: flex;
  align-items: center;
  gap: 2px;
}

.menubar__status b { margin-left: 2px; }
.menubar__search { margin-left: 6px; }
.battery { width: 15px; height: 8px; }

/* Window chrome */
.window {
  display: flex;
  flex-direction: column;
  flex: 1;
  min-height: 0;
  background: #646464;
}

.titlebar {
  display: grid;
  grid-template-columns: 1fr auto 1fr;
  align-items: center;
  height: 15px;
  flex: none;
  background: linear-gradient(#989898, #8d8d8d);
}

.lights { display: flex; gap: 5px; padding-left: 5px; }
.light { width: 8px; height: 8px; border-radius: 50%; }
.light--close { background: radial-gradient(#7a1410 20%, #ef5a50 30%); }
.light--min { background: #f7b93b; }
.light--max { background: #38c14c; }

.titlebar__title {
  display: flex;
  gap: 4px;
  align-items: center;
  margin: 0;
  font-size: 8px;
  font-weight: 400;
  color: #3b3b3b;
}

.control {
  display: flex;
  align-items: center;
  flex: none;
  height: 35px;
  padding: 0 13px 2px 12px;
  box-sizing: border-box;
  background: linear-gradient(#8d8d8d, #6a6a6a);
  border-bottom: 1px solid #585858;
}

.control__gap--left { flex: 9; }
.control__gap--right { flex: 7; }

.segment {
  display: flex;
  margin-right: 5px;
  border: 1px solid #4c4c4c;
  border-radius: 3px;
  overflow: hidden;
}

.segment__btn {
  display: flex;
  align-items: center;
  justify-content: center;
  width: 22px;
  height: 19px;
  color: #d2d2d2;
  background: linear-gradient(#848484, #6d6d6d);
}

.segment__btn + .segment__btn { border-left: 1px solid #545454; }
.segment__btn svg { width: 13px; height: 13px; }
.segment__btn--on { color: #cde4f5; background: linear-gradient(#2c3238, #47525d); }
.segment__btn--purple { color: #d9a2f5; background: #4c1d67; }
.segment__btn--metro { color: #c47cf0; }
.segment__count { font-size: 8px; }
.segment--transport { margin-right: 15px; }
.segment--transport .segment__btn { width: 27px; }
.segment--modes { margin: 0 0 0 15px; }
.segment--views { margin: 0 0 0 7px; }

.lcd {
  display: flex;
  width: 223px;
  height: 29px;
  box-sizing: border-box;
  border: 1px solid #0b0e12;
  border-radius: 3px;
  color: #a5cbee;
  background: linear-gradient(#252c38, #141920 50%, #0c1015 51%, #1a2330);
}

.lcd > * + * { border-left: 1px solid #080b0f; }

.lcd__icons {
  display: flex;
  align-items: center;
  justify-content: center;
  width: 30px;
  color: #7aa8d8;
}

.lcd__icons svg { width: 10px; height: 12px; }
.lcd__position { display: flex; width: 92px; justify-content: space-around; }

.lcd__cell {
  display: flex;
  flex-direction: column;
  align-items: center;
  justify-content: flex-end;
  font-family: Roboto, "Liberation Sans", sans-serif;
  font-weight: 500;
  white-space: nowrap;
}

.lcd__cell span { font-size: 12px; line-height: 16px; }
.lcd__cell .lcd__big { font-size: 16px; }
.lcd__cell i { font-style: normal; color: #28364a; }
.lcd__cell em { font-style: normal; font-size: 8px; }
.lcd__cell small { font-size: 6px; line-height: 7px; color: #46607f; }
.lcd__cell--tempo { width: 31px; }
.lcd__cell--key { width: 34px; }
.lcd__cell--sig { flex: 1; }
.lcd__cell sup,
.lcd__cell sub { font-size: 9px; line-height: 1px; }

/* Range inputs */
.slider {
  appearance: none;
  flex: none;
  width: 58px;
  height: 11px;
  border-radius: 6px;
  border: 1px solid #181a18;
  background: linear-gradient(90deg, #1e2420, #242a22 70%, #302f18);
}

.slider::-webkit-slider-thumb {
  appearance: none;
  width: 10px;
  height: 10px;
  border-radius: 50%;
  border: 1px solid #3c3c3c;
  background: radial-gradient(#868686, #656565);
}

.slider--master { width: 93px; height: 13px; }
.slider--master::-webkit-slider-thumb { width: 12px; height: 12px; }

/* Toolbar */
.toolbar {
  display: flex;
  flex: none;
  height: 39px;
  gap: 55px;
  padding: 8px 13px 0 53px;
  box-sizing: border-box;
  font-size: 7px;
  color: #202020;
  background: #636363;
}

.toolbar__group { display: flex; gap: 14px; }
.toolbar__group:last-child { margin-left: auto; }

.tool,
.nudge {
  display: flex;
  flex-direction: column;
  align-items: center;
  gap: 2px;
  height: 27px;
  white-space: nowrap;
}

.tool svg { width: 19px; height: 15px; }

.nudge__control {
  display: flex;
  height: 11px;
  margin: 2px 0;
  border: 1px solid #3a3a3a;
  border-radius: 6px;
  box-sizing: border-box;
}

.nudge__control button { width: 13px; display: flex; align-items: center; justify-content: center; }
.nudge__control svg { width: 4px; height: 5px; }
.nudge__control .nudge__value { width: 60px; border: solid #4a4a4a; border-width: 0 1px; font-size: 8px; }

/* Inspector */
.workspace {
  display: flex;
  flex: 1;
  min-height: 0;
  gap: 2px;
  padding: 1px 1px 0;
  background: #1b1b1b;
}

.inspector {
  display: flex;
  flex-direction: column;
  width: 182px;
  flex: none;
  background: #3e3e3e;
}

.inspector__row {
  display: flex;
  align-items: center;
  gap: 3px;
  height: 18px;
  padding-left: 8px;
  color: #d6d6d6;
  border-bottom: 1px solid #1c1c1c;
  background: linear-gradient(#343434, #2a2a2a);
}

.disclosure {
  border-left: 5px solid #949494;
  border-top: 3px solid transparent;
  border-bottom: 3px solid transparent;
}

.strips { display: flex; flex: 1; }

.strip {
  display: flex;
  flex-direction: column;
  align-items: center;
  justify-content: flex-end;
  flex: 1;
  min-width: 0;
  padding-bottom: 2px;
  font-size: 7px;
}

.strip + .strip { border-left: 1px solid #2a2a2a; }

.slot {
  width: 44px;
  height: 11px;
  flex: none;
  box-sizing: border-box;
  border: 1px solid #262626;
  border-radius: 2px;
  color: #d0d0d0;
  line-height: 9px;
  white-space: nowrap;
  background: linear-gradient(#545454, #444);
}

.slot--dim { color: #1c1c1c; }
.slot--empty { color: #181818; background: none; border-color: #333; }
.slot--eq { height: 19px; margin-top: 2px; }
.slot--midi { margin-top: 3px; }
.slot--blank { visibility: hidden; }
.slot--input,
.slot-pair { margin-top: 6px; }
.slot--fx { margin: 4px 0 6px; }
.slot--blue { color: #a8cdf8; border-color: #1f2a3c; background: linear-gradient(#3d69ab, #2e5593); }
.slot--read { color: #4fbf5c; }
.slot--out { margin-top: 5px; }

.slot-pair { display: flex; }
.slot-pair .slot { width: 33px; }
.slot-pair .slot:first-child { width: 11px; }
.slot-pair svg { width: 9px; height: 7px; }

.thin { width: 44px; height: 5px; margin-top: 1px; box-sizing: border-box; border: 1px solid #333; border-top: 0; }
.thin--send { width: 30px; height: 4px; align-self: flex-start; margin-left: 24px; }

.send { display: flex; align-items: center; width: 44px; height: 13px; gap: 2px; }
.send .slot { width: 31px; }
.send svg { width: 11px; height: 11px; }

.group-slot { width: 43px; height: 12px; margin: 3px 0; background: #222; border: solid #1a1a1a; border-width: 1px 0 0; box-sizing: border-box; }
.pan { width: 24px; height: 24px; margin-top: 3px; }

.levels { display: flex; gap: 3px; margin-top: 4px; }
.levels output { width: 20px; height: 11px; line-height: 11px; text-align: center; background: #1e1e1e; color: #ccc; }
.levels .levels__clip { color: #ffd09a; background: #b4561b; }
.levels .levels__peak { color: #e6cf42; }

.fader { display: flex; height: 86px; margin: 13px 6px 15px 0; }
.fader__ticks { width: 8px; height: 86px; margin-right: -3px; }

.fader__input {
  appearance: none;
  writing-mode: vertical-lr;
  direction: rtl;
  width: 12px;
  height: 86px;
  background: linear-gradient(90deg, transparent 5px, #171717 5px, #171717 7px, transparent 7px);
}

.fader__input::-webkit-slider-thumb {
  appearance: none;
  width: 12px;
  height: 21px;
  border-radius: 1px;
  border: 1px solid #505050;
  background: linear-gradient(#c2c2c2, #8d8d8d 20%, #a0a0a0 47%, #333 48%, #333 54%, #8b8b8b 55%, #777 80%, #b8b8b8);
}

.fader__scale {
  display: flex;
  flex-direction: column;
  justify-content: space-between;
  width: 11px;
  font-size: 5px;
  line-height: 5px;
  text-align: right;
  color: #828282;
}

.fader__meter { width: 5px; margin-left: 2px; border: 1px solid #191919; background: linear-gradient(#302c18, #222c22 30%); }

.mute-solo { display: flex; gap: 3px; }
.mute-solo .slot { width: 20px; font-size: 8px; }
.strip__name { margin: 5px 0 1px; white-space: nowrap; color: #d0d0d0; }

/* Arrange area */
.arrange {
  display: flex;
  flex-direction: column;
  flex: 1;
  min-width: 0;
  background: #3a3a3a;
}

.arrange__menu {
  display: flex;
  align-items: center;
  flex: none;
  height: 19px;
  gap: 6px;
  padding: 0 8px;
  box-sizing: border-box;
  border-bottom: 1px solid #141414;
  background: linear-gradient(#373737, #2b2b2b);
}

.arrange__gap { flex: 1; margin-right: -6px; }
.arrange__gap--wide { flex: 2; }

.chips { display: flex; }

.chip {
  display: flex;
  align-items: center;
  justify-content: center;
  gap: 5px;
  width: 20px;
  height: 13px;
  flex: none;
  border: 1px solid #202020;
  border-radius: 3px;
  color: #bdbdbd;
  white-space: nowrap;
  background: linear-gradient(#414141, #353535);
}

.arrange__menu .chip { background: linear-gradient(#363636, #2b2b2b); }
.arrange__menu .chip--menu { color: #d6d6d6; }
.chip svg { width: 13px; height: 9px; }
.chip--tool svg { width: 8px; }
.arrange__menu .chip--up { color: #767676; }
.arrange__menu .chip--catch { background: #25518a; border-color: #1b3050; }
.chip--menu { width: auto; padding: 0 4px 0 6px; gap: 5px; }
.chip--tool { width: 27px; }
.chip--dim { color: #777; }
.caret { border-top: 4px solid #6e6e6e; border-left: 2px solid transparent; border-right: 2px solid transparent; }

.pick { color: #838383; margin-right: -3px; }

.pick__box {
  display: flex;
  align-items: center;
  height: 13px;
  padding: 0 4px;
  box-sizing: border-box;
  border: 1px solid #1e1e1e;
  border-radius: 3px;
  color: #777;
  background: #2e2e2e;
}

.pick__box select { appearance: none; flex: 1; min-width: 0; border: 0; color: #d8d8d8; background: none; }
.pick__box svg { width: 4px; height: 8px; }
.pick__box--snap { width: 78px; }
.pick__box--drag { width: 62px; }

.zooms {
  display: flex;
  align-items: center;
  gap: 4px;
  height: 13px;
  padding: 0 2px;
  box-sizing: border-box;
  border: 1px solid #222;
  border-radius: 3px;
}

.zooms input { appearance: none; width: 30px; height: 9px; background: linear-gradient(transparent 4px, #161616 4px, #161616 5px, transparent 5px); }
.zooms input::-webkit-slider-thumb { appearance: none; width: 5px; height: 7px; border-radius: 3px 3px 0 0; background: #717171; }

.arrange__body { display: flex; flex: 1; min-height: 0; }

.headers {
  width: 251px;
  flex: none;
  box-sizing: border-box;
  border-right: 1px solid #191919;
  background: #3c3c3c;
}

.headers__top {
  display: flex;
  align-items: center;
  gap: 6px;
  height: 21px;
  padding: 0 7px 2px 8px;
  box-sizing: border-box;
  border-bottom: 1px solid #1b1b1b;
  background: #464646;
}

.headers__top .chip { background: linear-gradient(#565656, #444); }
.headers__top .chip--last { margin-left: auto; }

.track {
  display: flex;
  align-items: center;
  height: 37px;
  box-sizing: border-box;
  padding-right: 6px;
  border-left: 2px solid #383838;
  border-bottom: 1px solid #202020;
  border-top: 1px solid #555;
  background: linear-gradient(#484848, #404040);
}

.track--marked { border-left-color: #d6d6d6; }
.track--selected { background: linear-gradient(#707070, #606060); }

.track__number { width: 13px; line-height: 35px; text-align: center; border-right: 1px solid #2b2b2b; }
.track__icon { width: 27px; height: 13px; margin: 0 10px; }
.track__main { display: flex; flex-direction: column; flex: 1; min-width: 0; gap: 2px; }
.track__name { white-space: nowrap; color: #d4d4d4; }
.track--selected .track__name { font-weight: 700; color: #f2f2f2; }
.track__controls { display: flex; gap: 4px; }
.track__pair { display: flex; border: 1px solid #262626; border-radius: 2px; }

.track__pair button {
  width: 12px;
  height: 10px;
  font-size: 7px;
  line-height: 10px;
  color: #c2c2c2;
  background: linear-gradient(#555, #4a4a4a);
}

.track__pair button + button { border-left: 1px solid #2c2c2c; }
.track--selected .track__pair button { background: #797979; color: #e5e5e5; }
.track--selected .track__pair button.armed { background: #c22d27; }
.track__pair button.monitoring { background: #a1581b; color: #ffc37d; }
.track .slider { margin: 12px 9px 0 0; }
.track__pan { width: 18px; height: 20px; margin-top: 3px; }

/* Timeline */
.timeline {
  display: flex;
  flex-direction: column;
  flex: 1;
  min-width: 0;
  position: relative;
  overflow: hidden;
  padding-left: 7px;
  background: #1c1c1c;
}

.ruler {
  position: relative;
  flex: none;
  height: 21px;
  box-sizing: border-box;
  border-bottom: 1px solid #141414;
  background: #2b2b2b;
}

.ruler__ticks { position: absolute; inset: 0 auto auto 0; }
.ruler__start { position: absolute; left: -6px; top: 0; width: 14px; height: 20px; }
.ruler__labels { position: relative; display: flex; padding-left: 3px; }
.ruler__labels span { flex: none; padding-left: 3px; box-sizing: border-box; color: #c8c8c8; }
.ruler__labels span:first-child { padding-left: 0; }
.ruler__labels .dim { color: #6b6b6b; }
.ruler__marker,
.ruler__dots { position: absolute; top: 10px; left: 395px; font-size: 7px; line-height: 9px; font-weight: 700; color: #e0e0e0; background: #2b2b2b; }
.ruler__dots { left: 374px; }

.lanes {
  position: relative;
  border-left: 1px solid #686868;
  margin-left: -1px;
  background: #252525;
}

.lanes__grid { position: absolute; inset: 0 auto auto 0; }
.lane { position: relative; display: flex; height: 37px; }

.region {
  position: relative;
  flex: none;
  height: 36px;
  box-sizing: border-box;
  overflow: hidden;
  border-radius: 3px;
}

.region__title {
  display: flex;
  align-items: center;
  gap: 6px;
  height: 12px;
  padding-left: 3px;
  font-size: 7px;
  font-weight: 700;
  white-space: nowrap;
  color: #dfe9f5;
}

.region__title i { width: 4px; height: 4px; flex: none; border: 1px solid #dfe9f5; border-radius: 50%; }
.region__art { position: absolute; inset: 0; }

.region--green { color: #a9f5a6; border: 1px solid #8ceb89; background: #15832a; }
.region--green .region__title { padding-left: 2px; color: #13662a; background: #b4fbb1; }
.region--green .region__title--tight { padding-left: 0; }
.region--blue { color: #a5c6ee; background: linear-gradient(#306599, #2a4f7c); }
.region--magenta { color: #f29de0; background: linear-gradient(#bd0496, #92107e); }
.region--purple { color: #eda3f7; background: linear-gradient(#9804c0, #7c0a96); }
.region--teal { color: #a0fbfa; background: linear-gradient(#04bcbd, #0b9a9d); }

.timeline__end { flex: 1; margin-left: -1px; border-left: 1px solid #686868; background: #232323; }

.timeline::after {
  content: '';
  position: absolute;
  inset: 0 0 0 713px;
  background: rgba(16, 16, 16, 0.45);
}

.scrollbar { width: 9px; flex: none; border-left: 1px solid #1b1b1b; background: #393939; }
.arrange__foot { flex: none; height: 9px; border-top: 1px solid #121212; background: #303030; }
</style>
